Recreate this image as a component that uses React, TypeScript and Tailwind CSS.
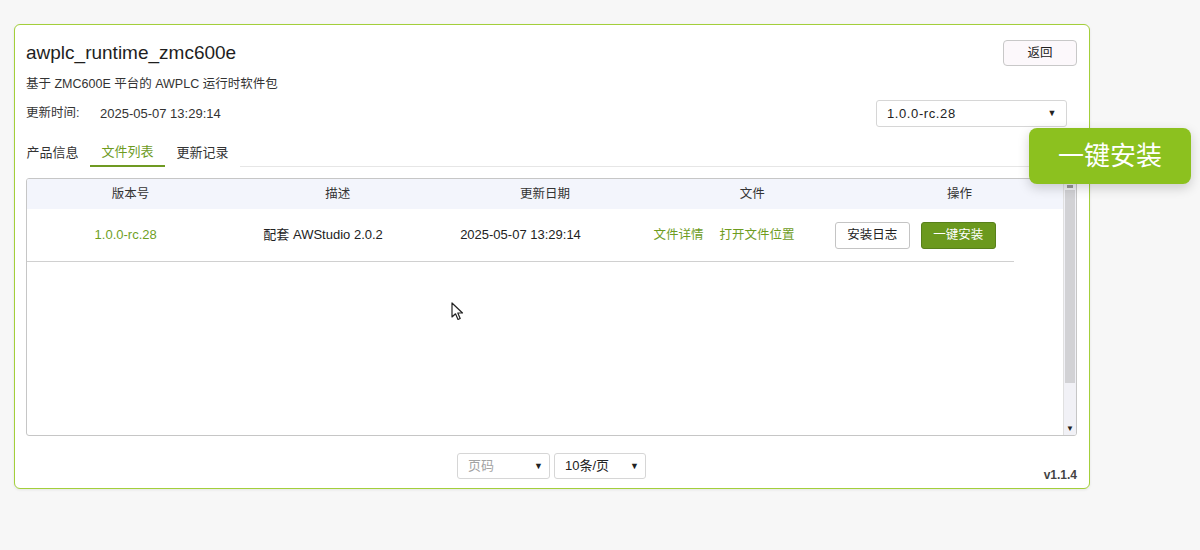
const font = { fontFamily: '"Liberation Sans", "Noto Sans CJK SC", sans-serif' };

const Caret = () => <span className="text-[9px] text-[#222] leading-none">▼</span>;

const columns = ["版本号", "描述", "更新日期", "文件", "操作"];

const App = () => {
    return (
        <div style={font} className="relative min-h-[550px] w-[1200px] bg-[#f7f7f7] pt-[24px] pl-[14px]">
            <div className="flex h-[465px] w-[1076px] flex-col rounded-[6px] border border-[#a3cf3a] bg-white pl-[11px] pr-[12px] pt-[15px] pb-[8px] shadow-[0_1px_3px_rgba(0,0,0,0.08)]">
                {/* header */}
                <div className="flex h-[26px] items-center justify-between">
                    <h1 className="text-[19px] leading-[26px] text-[#1e1e1e]">awplc_runtime_zmc600e</h1>
                    <button className="h-[26px] w-[74px] rounded-[4px] border border-[#c8c8c8] bg-[#fcf8fb] text-[12.5px] text-[#222]">
                        返回
                    </button>
                </div>
                <p className="mt-[9px] text-[12.5px] leading-[18px] text-[#333]">基于 ZMC600E 平台的 AWPLC 运行时软件包</p>
                <div className="mt-[7px] flex h-[27px] items-center justify-between">
                    <div className="flex text-[13px] text-[#333]">
                        <span className="w-[74px] text-[12.5px]">更新时间:</span>
                        <span>2025-05-07 13:29:14</span>
                    </div>
                    <div className="mr-[10px] flex h-[27px] w-[191px] items-center justify-between rounded-[3px] border border-[#d6d6d6] pl-[10px] pr-[9px] text-[13px] tracking-[0.6px] text-[#222]">
                        <span>1.0.0-rc.28</span>
                        <Caret />
                    </div>
                </div>

                {/* tabs */}
                <div className="-ml-[11px] -mr-[12px] mt-[11px] flex h-[29px] text-[13px]">
                    <div className="flex w-[75px] items-center justify-center text-[#333]">产品信息</div>
                    <div className="flex w-[75px] items-center justify-center border-b-2 border-[#6f9a22] text-[#6e9b1f]">文件列表</div>
                    <div className="flex w-[75px] items-center justify-center text-[#333]">更新记录</div>
                    <div className="flex-1 border-b border-[#e6e6e6]" />
                </div>

                {/* table */}
                <div className="mt-[11px] flex h-[258px] overflow-hidden rounded-[3px] border border-[#c6c6c6]">
                    <div className="flex-1">
                        <div className="grid h-[30px] grid-cols-5 items-center bg-[#f3f5fc] text-center text-[12.5px] text-[#333]">
                            {columns.map((c) => (
                                <div key={c}>{c}</div>
                            ))}
                        </div>
                        <div className="grid h-[53px] w-[987px] grid-cols-5 items-center border-b border-[#d0d0d0] text-center text-[13px] text-[#222]">
                            <div className="text-[#6f9f1f]">1.0.0-rc.28</div>
                            <div>配套 AWStudio 2.0.2</div>
                            <div>2025-05-07 13:29:14</div>
                            <div className="flex justify-center gap-[16px] pl-[12px] text-[12.5px] text-[#6e9c1e]">
                                <span>文件详情</span>
                                <span>打开文件位置</span>
                            </div>
                            <div className="flex justify-center gap-[11px]">
                                <button className="h-[27px] w-[75px] rounded-[3px] border border-[#c4c4c4] bg-white text-[12.5px] text-[#222]">
                                    安装日志
                                </button>
                                <button className="h-[27px] w-[75px] rounded-[3px] border border-[#57801a] bg-[#6b991e] text-[12.5px] text-white">
                                    一键安装
                                </button>
                            </div>
                        </div>
                    </div>
                    {/* scrollbar */}
                    <div className="flex w-[13px] flex-col border-l border-[#e0e0e0] bg-[#f1f1f6]">
                        <div className="flex h-[11px] items-end justify-center">
                            <span className="mb-[2px] block h-[3px] w-[6px] bg-[#999]" />
                        </div>
                        <div className="mx-[1px] h-[193px] bg-[#d2d2d5]" />
                        <div className="flex-1" />
                        <div className="flex h-[12px] items-center justify-center text-[8px] leading-none text-[#222]">▼</div>
                    </div>
                </div>

                {/* pagination */}
                <div className="mt-[17px] grid grid-cols-[1fr_auto_1fr] items-end">
                    <div />
                    <div className="flex gap-[4px] text-[13px]">
                        <div className="flex h-[26px] w-[93px] items-center justify-between rounded-[3px] border border-[#d6d6d6] pl-[10px] pr-[6px] text-[#a3a3a3]">
                            <span>页码</span>
                            <Caret />
                        </div>
                        <div className="flex h-[26px] w-[92px] items-center justify-between rounded-[3px] border border-[#d6d6d6] pl-[10px] pr-[6px] text-[#222]">
                            <span>10条/页</span>
                            <Caret />
                        </div>
                    </div>
                    <div className="-mb-[4px] justify-self-end text-[12px] font-semibold leading-[16px] text-[#444]">v1.1.4</div>
                </div>
            </div>

            {/* floating tooltip */}
            <div className="absolute left-[1029px] top-[128px] flex h-[56px] w-[162px] items-center justify-center rounded-[8px] bg-[#8cc11f] text-[26px] text-white shadow-[0_4px_12px_rgba(0,0,0,0.18)]">
                一键安装
            </div>

            {/* mouse cursor */}
            <svg className="absolute left-[451px] top-[302px]" width="14" height="20" viewBox="0 0 14 20">
                <path
                    d="M1 1 L1 15 L4.5 11.8 L7 17.5 L9.2 16.5 L6.8 11 L11.5 11 Z"
                    fill="white"
                    stroke="#222"
                    strokeWidth="1.2"
                    strokeLinejoin="round"
                />
            </svg>
        </div>
    );
};

export default App;
